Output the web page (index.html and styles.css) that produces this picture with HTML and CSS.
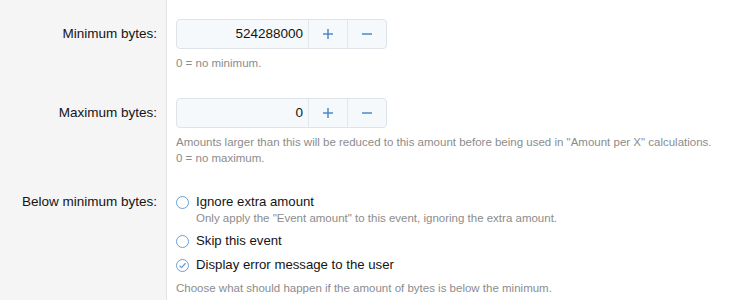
FILE: index.html
```html
<!DOCTYPE html>
<html lang="en">
<head>
  <meta charset="UTF-8" />
  <title>Options</title>
  <link rel="stylesheet" href="styles.css">
</head>
<body>
  <div class="form">
    <dl class="row">
      <dt>Minimum bytes:</dt>
      <dd>
        <div class="spinbox">
          <span class="value">524288000</span>
          <button class="step">
            <svg width="12" height="12" viewBox="0 0 12 12"><path d="M6 1v10M1 6h10" /></svg>
          </button>
          <button class="step">
            <svg width="12" height="12" viewBox="0 0 12 12"><path d="M1 6h10" /></svg>
          </button>
        </div>
        <div class="hint">0 = no minimum.</div>
      </dd>
    </dl>

    <dl class="row">
      <dt>Maximum bytes:</dt>
      <dd>
        <div class="spinbox">
          <span class="value">0</span>
          <button class="step">
            <svg width="12" height="12" viewBox="0 0 12 12"><path d="M6 1v10M1 6h10" /></svg>
          </button>
          <button class="step">
            <svg width="12" height="12" viewBox="0 0 12 12"><path d="M1 6h10" /></svg>
          </button>
        </div>
        <div class="hint">Amounts larger than this will be reduced to this amount before being used in "Amount per X" calculations.<br>0 = no maximum.</div>
      </dd>
    </dl>

    <dl class="row">
      <dt class="radio-label">Below minimum bytes:</dt>
      <dd>
        <ul class="choices">
          <li>
            <div class="choice"><span class="radio"></span>Ignore extra amount</div>
            <div class="hint sub">Only apply the "Event amount" to this event, ignoring the extra amount.</div>
          </li>
          <li>
            <div class="choice"><span class="radio"></span>Skip this event</div>
          </li>
          <li>
            <div class="choice">
              <span class="radio checked">
                <svg width="9" height="9" viewBox="0 0 9 9"><path d="M1.5 4.6l2 2 4-4.4" /></svg>
              </span>Display error message to the user
            </div>
          </li>
        </ul>
        <div class="hint after">Choose what should happen if the amount of bytes is below the minimum.</div>
      </dd>
    </dl>
  </div>
</body>
</html>
```

FILE: styles.css
```css
body {
  margin: 0;
  font-family: "Liberation Sans", Arial, Helvetica, sans-serif;
  color: #141414;
  background-color: #fff;
}

.form {
  padding-top: 5px;
  background: linear-gradient(to right, #f5f5f5 166px, #e4e4e4 166px, #e4e4e4 167px, #fff 167px);
  height: 300px;
  box-sizing: border-box;
  overflow: hidden;
}

.row {
  display: flex;
  margin: 0;
  padding: 14px 0 13px;
}

.row dt {
  width: 157px;
  flex-shrink: 0;
  text-align: right;
  font-size: 13.5px;
  line-height: 18px;
  padding-top: 6px;
}

.row dt.radio-label {
  padding-top: 0;
}

.row dd {
  flex: 1;
  min-width: 0;
  margin: 0 0 0 19px;
}

.spinbox {
  display: inline-flex;
  vertical-align: top;
  height: 30px;
  box-sizing: border-box;
  border: 1px solid #dfe3e8;
  border-radius: 4px;
  background-color: #f6f9fc;
}

.spinbox .value {
  width: 131px;
  font-size: 13.5px;
  line-height: 28px;
  text-align: right;
  padding-right: 5px;
  box-sizing: border-box;
}

.step {
  width: 39px;
  border: 0;
  border-left: 1px solid #e3e7ec;
  background: transparent;
  padding: 0;
  display: flex;
  align-items: center;
  justify-content: center;
}

.step svg path {
  stroke: #4c8ac9;
  stroke-width: 1.5;
  fill: none;
}

.hint {
  font-size: 11.5px;
  line-height: 16px;
  color: #8c8c8c;
  margin-top: 6px;
  white-space: nowrap;
}

.choices {
  list-style: none;
  margin: 0;
  padding: 0;
}

.choices li {
  margin-bottom: 6px;
}

.choice {
  display: flex;
  align-items: center;
  font-size: 13.2px;
  line-height: 18px;
}

.radio {
  width: 13px;
  height: 13px;
  box-sizing: border-box;
  border: 1.5px solid #6a9fd6;
  border-radius: 50%;
  background: #fff;
  margin-right: 7px;
  display: flex;
  align-items: center;
  justify-content: center;
}

.radio svg path {
  stroke: #6a9fd6;
  stroke-width: 1.3;
  fill: none;
}

.hint.sub {
  margin: -1px 0 0 20px;
}

.hint.after {
  margin-top: 0;
}
```
